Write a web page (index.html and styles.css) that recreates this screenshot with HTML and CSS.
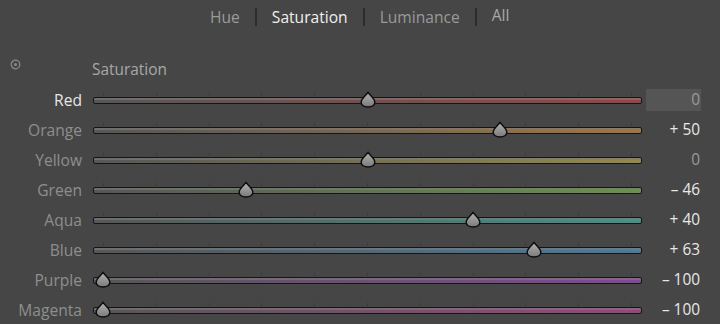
FILE: index.html
```html
<!DOCTYPE html>
<html>
<head>
<meta charset="utf-8">
<link rel="stylesheet" href="styles.css">
</head>
<body>
<svg class="defs" width="0" height="0">
  <defs>
    <linearGradient id="tg" x1="0" y1="0" x2="0" y2="1">
      <stop offset="0" stop-color="#b4b4b4"/>
      <stop offset="1" stop-color="#7a7a7a"/>
    </linearGradient>
    <symbol id="drop" viewBox="0 0 16 17">
      <path d="M8 1.2 C9.2 4.2 14.8 7 14.8 11.2 C14.8 14.2 11.8 16 8 16 C4.2 16 1.2 14.2 1.2 11.2 C1.2 7 6.8 4.2 8 1.2 Z" fill="url(#tg)" stroke="#0e0e0e" stroke-width="1.5" stroke-linejoin="round"/>
    </symbol>
  </defs>
</svg>
<div class="panel">
  <nav class="tabs">
    <span class="tab">Hue</span><span class="sep"></span>
    <span class="tab active">Saturation</span><span class="sep"></span>
    <span class="tab">Luminance</span><span class="sep"></span>
    <span class="tab all">All</span>
  </nav>
  <div class="sub">
    <span class="target"><svg width="11" height="11" viewBox="0 0 11 11"><circle cx="5.5" cy="5.5" r="4.3" fill="none" stroke="#8a8a8a" stroke-width="1.2"/><circle cx="5.5" cy="5.5" r="1.5" fill="#8a8a8a"/></svg></span>
    <span class="subtitle">Saturation</span>
  </div>
  <div class="rows">
    <div class="row sel"><span class="label">Red</span><div class="track" style="--c:#9e4242"><div class="ticks"><i></i><i></i><i></i><i></i><i></i><i></i><i></i><i></i><i></i><i></i><i></i></div><div class="bar"></div><svg class="thumb" style="left:264.5px"><use href="#drop"/></svg></div><span class="val box">0</span></div>
    <div class="row"><span class="label">Orange</span><div class="track" style="--c:#a3753d"><div class="ticks"><i></i><i></i><i></i><i></i><i></i><i></i><i></i><i></i><i></i><i></i><i></i></div><div class="bar"></div><svg class="thumb" style="left:396.75px"><use href="#drop"/></svg></div><span class="val">+ 50</span></div>
    <div class="row"><span class="label">Yellow</span><div class="track" style="--c:#968a45"><div class="ticks"><i></i><i></i><i></i><i></i><i></i><i></i><i></i><i></i><i></i><i></i><i></i></div><div class="bar"></div><svg class="thumb" style="left:264.5px"><use href="#drop"/></svg></div><span class="val dim">0</span></div>
    <div class="row"><span class="label">Green</span><div class="track" style="--c:#679446"><div class="ticks"><i></i><i></i><i></i><i></i><i></i><i></i><i></i><i></i><i></i><i></i><i></i></div><div class="bar"></div><svg class="thumb" style="left:142.8px"><use href="#drop"/></svg></div><span class="val">– 46</span></div>
    <div class="row"><span class="label">Aqua</span><div class="track" style="--c:#3f9488"><div class="ticks"><i></i><i></i><i></i><i></i><i></i><i></i><i></i><i></i><i></i><i></i><i></i></div><div class="bar"></div><svg class="thumb" style="left:370.3px"><use href="#drop"/></svg></div><span class="val">+ 40</span></div>
    <div class="row"><span class="label">Blue</span><div class="track" style="--c:#467ca0"><div class="ticks"><i></i><i></i><i></i><i></i><i></i><i></i><i></i><i></i><i></i><i></i><i></i></div><div class="bar"></div><svg class="thumb" style="left:431.1px"><use href="#drop"/></svg></div><span class="val">+ 63</span></div>
    <div class="row"><span class="label">Purple</span><div class="track" style="--c:#88449c"><div class="ticks"><i></i><i></i><i></i><i></i><i></i><i></i><i></i><i></i><i></i><i></i><i></i></div><div class="bar"></div><svg class="thumb" style="left:0px"><use href="#drop"/></svg></div><span class="val">– 100</span></div>
    <div class="row"><span class="label">Magenta</span><div class="track" style="--c:#9c4480"><div class="ticks"><i></i><i></i><i></i><i></i><i></i><i></i><i></i><i></i><i></i><i></i><i></i></div><div class="bar"></div><svg class="thumb" style="left:0px"><use href="#drop"/></svg></div><span class="val">– 100</span></div>
  </div>
</div>
</body>
</html>
```
FILE: styles.css
```css
html, body {
  margin: 0;
  padding: 0;
  background: #464646;
}
body {
  width: 720px;
  height: 324px;
  overflow: hidden;
  font-family: "Open Sans", "Noto Sans", sans-serif;
}
.defs {
  position: absolute;
  width: 0;
  height: 0;
}
.panel {
  display: flex;
  flex-direction: column;
}
.tabs {
  height: 33px;
  display: flex;
  align-items: center;
  justify-content: flex-start;
  padding-left: 195px;
  font-size: 15.6px;
}
.tab {
  color: #9a9a9a;
  padding: 0 15px;
  line-height: 20px;
}
.tab.active { color: #f0f0f0; }
.tab.all { color: #a8a8a8; position: relative; top: -2px; }
.sep {
  width: 2px;
  height: 18px;
  background: #2c2c2c;
}
.sub {
  height: 52px;
  display: flex;
  align-items: flex-start;
  padding-top: 26px;
  box-sizing: border-box;
}
.target {
  width: 11px;
  height: 11px;
  margin-left: 10px;
  margin-top: -6px;
}
.subtitle {
  margin-left: 71px;
  font-size: 15.4px;
  color: #a8a8a8;
  line-height: 20px;
  margin-top: 1px;
}
.rows {
  display: flex;
  flex-direction: column;
}
.row {
  height: 30px;
  display: flex;
  align-items: center;
}
.label {
  width: 82px;
  text-align: right;
  font-size: 15.6px;
  color: #8e8e8e;
}
.row.sel .label { color: #e6e6e6; }
.track {
  position: relative;
  margin-left: 11px;
  width: 549px;
  height: 30px;
}
.ticks {
  position: absolute;
  left: 10px;
  right: 10px;
  top: 8px;
  display: flex;
  justify-content: space-between;
}
.ticks i {
  display: block;
  width: 1px;
  height: 3px;
  background: #3a3a3a;
}
.bar {
  position: absolute;
  left: 0;
  right: 0;
  top: 12px;
  height: 7px;
  box-sizing: border-box;
  border: 1px solid #151515;
  border-radius: 2px;
  background:
    linear-gradient(to bottom, rgba(125,125,125,0.6) 0, rgba(125,125,125,0.6) 2px, rgba(0,0,0,0) 2px),
    linear-gradient(to right, #575757 0%, var(--c) 100%);
}
.thumb {
  position: absolute;
  top: 6px;
  margin-left: 2px;
  width: 16px;
  height: 17px;
}
.val {
  width: 55px;
  margin-left: 4px;
  height: 22px;
  line-height: 22px;
  box-sizing: border-box;
  padding-right: 1px;
  text-align: right;
  font-size: 15.4px;
  color: #e8e8e8;
}
.val.box {
  background: #555555;
  color: #9a9a9a;
}
.val.dim { color: #9a9a9a; }
```
